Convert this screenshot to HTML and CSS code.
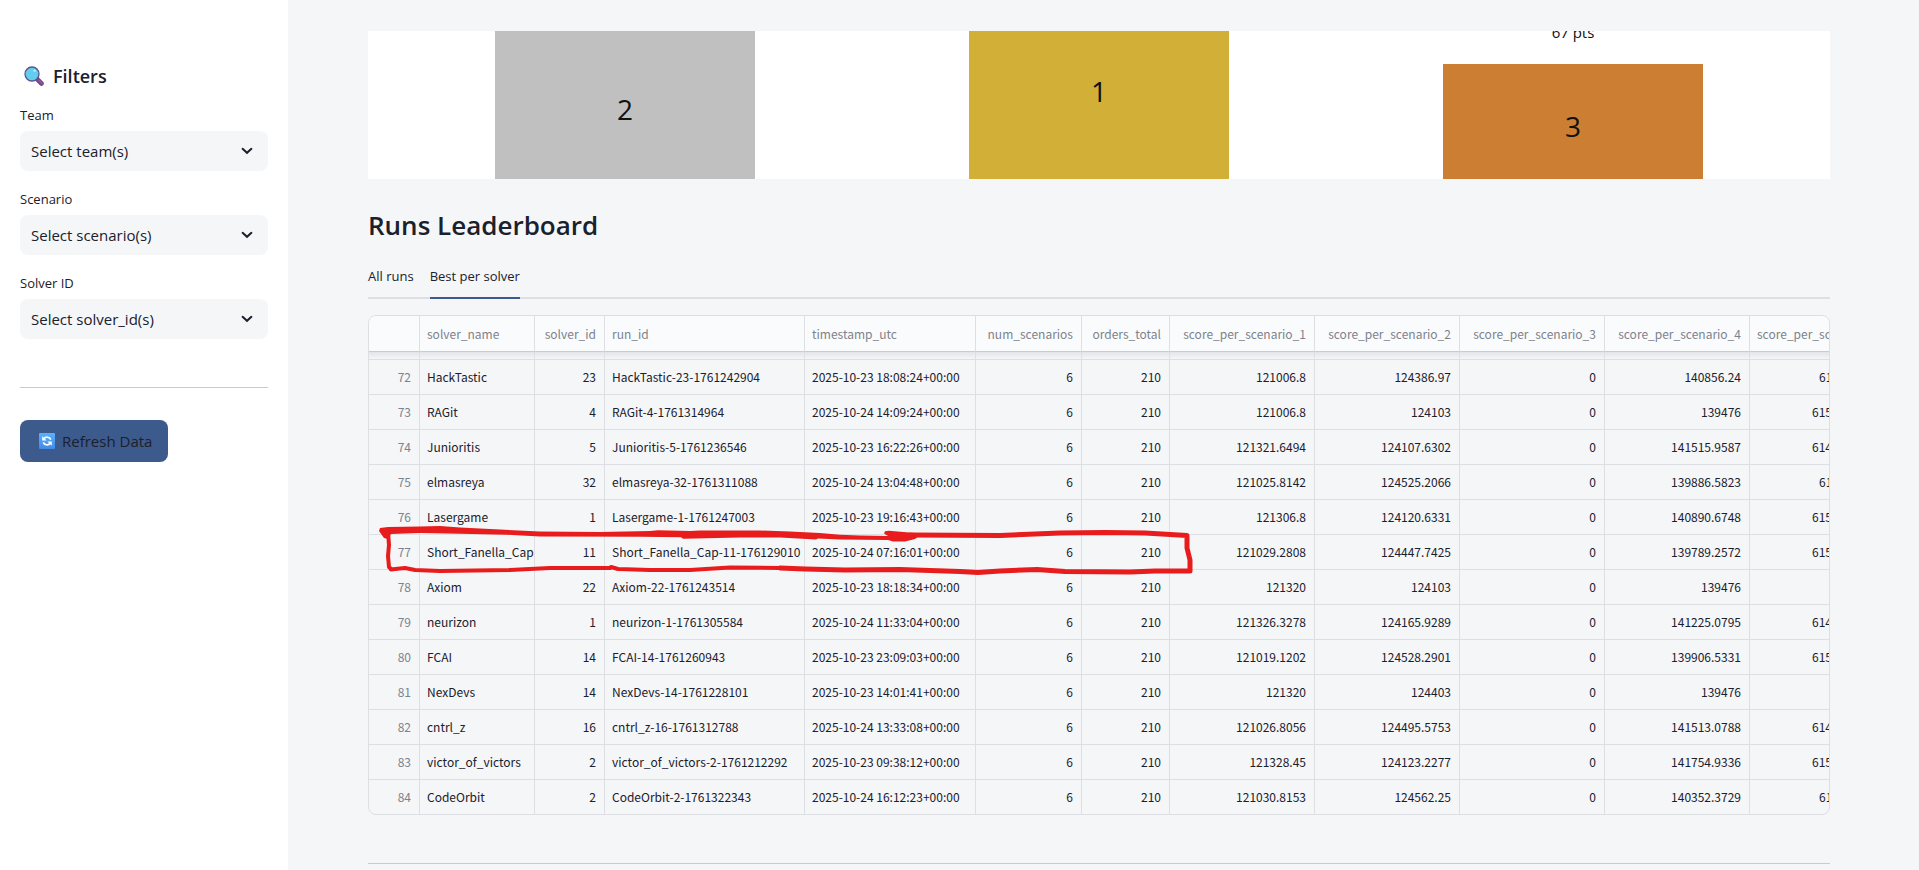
FILE: index.html
```html
<!DOCTYPE html>
<html lang="en">
<head>
<meta charset="utf-8">
<title>Runs Leaderboard</title>
<link rel="stylesheet" href="styles.css">
</head>
<body>
<div class="app">
  <aside class="sidebar">
    <h2 class="sidebar-title">
      <svg class="icon-search" viewBox="0 0 20 20" aria-hidden="true"><path d="M12.5 12.5 L17.5 17.5" stroke="#6f4a8c" stroke-width="4.6" stroke-linecap="round"/><path d="M15 14.5 L18 17.3" stroke="#8f5594" stroke-width="2" stroke-linecap="round"/><circle cx="8" cy="8" r="7" fill="#64cdee" stroke="#57568f" stroke-width="1.3"/><circle cx="10.6" cy="4.8" r="1.3" fill="#b4ebfb"/></svg>
      Filters
    </h2>
    <div class="field">
      <label for="team">Team</label>
      <div class="select-wrap"><select id="team"><option>Select team(s)</option></select><svg class="chevron" viewBox="0 0 12 8" aria-hidden="true"><path d="M1.6 1.8 L6 5.8 L10.4 1.8"/></svg></div>
    </div>
    <div class="field">
      <label for="scenario">Scenario</label>
      <div class="select-wrap"><select id="scenario"><option>Select scenario(s)</option></select><svg class="chevron" viewBox="0 0 12 8" aria-hidden="true"><path d="M1.6 1.8 L6 5.8 L10.4 1.8"/></svg></div>
    </div>
    <div class="field">
      <label for="solver">Solver ID</label>
      <div class="select-wrap"><select id="solver"><option>Select solver_id(s)</option></select><svg class="chevron" viewBox="0 0 12 8" aria-hidden="true"><path d="M1.6 1.8 L6 5.8 L10.4 1.8"/></svg></div>
    </div>
    <hr class="rule sidebar-rule">
    <button class="refresh" type="button">
      <svg class="icon-refresh" viewBox="0 0 16 16" aria-hidden="true"><defs><linearGradient id="rg" x2="0" y2="1"><stop stop-color="#58b2fb"/><stop offset="1" stop-color="#4389e8"/></linearGradient></defs><rect width="16" height="16" rx="1" fill="url(#rg)"/><g fill="none" stroke="#fff" stroke-width="1.7"><path d="M5 5.6 C6.5 3.6 10.5 3.6 11.8 6.6"/><path d="M11 10.4 C9.5 12.4 5.5 12.4 4.2 9.4"/></g><path d="M3.2 3.2 V7.6 H7.6Z M12.8 12.8 V8.4 H8.4Z" fill="#fff"/></svg>
      Refresh Data
    </button>
  </aside>

  <main class="main">
    <section class="podium" aria-label="Podium">
      <div class="step silver">2</div>
      <div class="step gold">1</div>
      <div class="third"><span class="points">67 pts</span><div class="step bronze">3</div></div>
    </section>

    <h1 class="heading">Runs Leaderboard</h1>
    <div class="tabs" role="tablist">
      <button class="tab" type="button" role="tab">All runs</button>
      <button class="tab active" type="button" role="tab" aria-selected="true">Best per solver</button>
    </div>

    <div class="grid-holder">
      <div class="grid">
        <table>
          <colgroup><col class="c-index"><col class="c-name"><col class="c-id"><col class="c-run"><col class="c-time"><col class="c-num"><col class="c-orders"><col class="c-score"><col class="c-score"><col class="c-score"><col class="c-score"><col class="c-score"></colgroup>
          <thead><tr><th></th><th>solver_name</th><th>solver_id</th><th>run_id</th><th>timestamp_utc</th><th>num_scenarios</th><th>orders_total</th><th>score_per_scenario_1</th><th>score_per_scenario_2</th><th>score_per_scenario_3</th><th>score_per_scenario_4</th><th>score_per_scenario_5</th></tr></thead>
          <tbody>
            <tr class="partial"><td></td><td></td><td></td><td></td><td></td><td></td><td></td><td></td><td></td><td></td><td></td><td></td></tr>
            <tr><td>72</td><td>HackTastic</td><td>23</td><td>HackTastic-23-1761242904</td><td>2025-10-23 18:08:24+00:00</td><td>6</td><td>210</td><td>121006.8</td><td>124386.97</td><td>0</td><td>140856.24</td><td class="short">61</td></tr>
            <tr><td>73</td><td>RAGit</td><td>4</td><td>RAGit-4-1761314964</td><td>2025-10-24 14:09:24+00:00</td><td>6</td><td>210</td><td>121006.8</td><td>124103</td><td>0</td><td>139476</td><td>615</td></tr>
            <tr><td>74</td><td>Junioritis</td><td>5</td><td>Junioritis-5-1761236546</td><td>2025-10-23 16:22:26+00:00</td><td>6</td><td>210</td><td>121321.6494</td><td>124107.6302</td><td>0</td><td>141515.9587</td><td>614</td></tr>
            <tr><td>75</td><td>elmasreya</td><td>32</td><td>elmasreya-32-1761311088</td><td>2025-10-24 13:04:48+00:00</td><td>6</td><td>210</td><td>121025.8142</td><td>124525.2066</td><td>0</td><td>139886.5823</td><td class="short">61</td></tr>
            <tr><td>76</td><td>Lasergame</td><td>1</td><td>Lasergame-1-1761247003</td><td>2025-10-23 19:16:43+00:00</td><td>6</td><td>210</td><td>121306.8</td><td>124120.6331</td><td>0</td><td>140890.6748</td><td>615</td></tr>
            <tr><td>77</td><td>Short_Fanella_Cap</td><td>11</td><td>Short_Fanella_Cap-11-176129010</td><td>2025-10-24 07:16:01+00:00</td><td>6</td><td>210</td><td>121029.2808</td><td>124447.7425</td><td>0</td><td>139789.2572</td><td>615</td></tr>
            <tr><td>78</td><td>Axiom</td><td>22</td><td>Axiom-22-1761243514</td><td>2025-10-23 18:18:34+00:00</td><td>6</td><td>210</td><td>121320</td><td>124103</td><td>0</td><td>139476</td><td></td></tr>
            <tr><td>79</td><td>neurizon</td><td>1</td><td>neurizon-1-1761305584</td><td>2025-10-24 11:33:04+00:00</td><td>6</td><td>210</td><td>121326.3278</td><td>124165.9289</td><td>0</td><td>141225.0795</td><td>614</td></tr>
            <tr><td>80</td><td>FCAI</td><td>14</td><td>FCAI-14-1761260943</td><td>2025-10-23 23:09:03+00:00</td><td>6</td><td>210</td><td>121019.1202</td><td>124528.2901</td><td>0</td><td>139906.5331</td><td>615</td></tr>
            <tr><td>81</td><td>NexDevs</td><td>14</td><td>NexDevs-14-1761228101</td><td>2025-10-23 14:01:41+00:00</td><td>6</td><td>210</td><td>121320</td><td>124403</td><td>0</td><td>139476</td><td></td></tr>
            <tr><td>82</td><td>cntrl_z</td><td>16</td><td>cntrl_z-16-1761312788</td><td>2025-10-24 13:33:08+00:00</td><td>6</td><td>210</td><td>121026.8056</td><td>124495.5753</td><td>0</td><td>141513.0788</td><td>614</td></tr>
            <tr><td>83</td><td>victor_of_victors</td><td>2</td><td>victor_of_victors-2-1761212292</td><td>2025-10-23 09:38:12+00:00</td><td>6</td><td>210</td><td>121328.45</td><td>124123.2277</td><td>0</td><td>141754.9336</td><td>615</td></tr>
            <tr><td>84</td><td>CodeOrbit</td><td>2</td><td>CodeOrbit-2-1761322343</td><td>2025-10-24 16:12:23+00:00</td><td>6</td><td>210</td><td>121030.8153</td><td>124562.25</td><td>0</td><td>140352.3729</td><td class="short">61</td></tr>
          </tbody>
        </table>
      </div>
      <svg class="marker" viewBox="368 515 840 70" width="840" height="70" aria-hidden="true">
        <path fill="#e81c1c" d="M380 528 L388 527 L420 526.5 L440 526 L460 527.5 L500 529.5 L540 531.5 L600 532 L650 531 L658 530.3 L690 531 L700 530.5 L760 530.5 L790 531.5 L820 533 L840 534.8 L860 535.5 L888 536 L884 533.5 L885 531.3 L889 530.8 L915 533 L919 536 L915 539 L905 541.5 L893 541.5 L888 540 L840 539.5 L818 538.5 L816 539.5 L780 537.5 L740 537.5 L683 538.8 L681 537.3 L640 536.8 L540 536.5 L507 534.8 L460 533.8 L420 533 L391 534 L388 539 L384 538 L379 531Z"/>
        <g fill="none" stroke="#e81c1c" stroke-width="5" stroke-linecap="round" stroke-linejoin="round">
          <path stroke-width="4" d="M388 532 L389 545 L388 556 L389 567 L391 569"/>
          <path stroke-width="4" d="M391 569.5 L400 568.5 L405 568 L415 570 L440 571 L510 570 L550 568 L610 568 L611 567 L618 569 L650 570 L690 570 L730 567.5 L780 568"/>
          <path d="M780 568 L805 569 L845 570 L900 569.5 L960 571.5 L978 572.5 L1000 571 L1037 569.5 L1065 571.5 L1130 572 L1155 571 L1190 571 L1190 560 L1187 548 L1187 535.5 L1145 533 L1105 532.5 L1060 533 L1000 535.5 L910 535"/>
        </g>
      </svg>
    </div>
    <hr class="rule">
  </main>
</div>
</body>
</html>
```
FILE: styles.css
```css
* { box-sizing: border-box; }

body {
  margin: 0;
  background: #f5f6f8;
  color: #1a202c;
  font-family: "Open Sans", "Noto Sans", sans-serif;
  font-size: 15px;
}

.app { display: flex; min-height: 100vh; }

.sidebar {
  flex: none;
  width: 288px;
  padding: 60px 20px 20px;
  background: #fff;
}

.sidebar-title {
  display: flex;
  align-items: center;
  gap: 9px;
  margin: 0 0 11px;
  padding-left: 4px;
  font-size: 18px;
  line-height: 32px;
  font-weight: 600;
}

.icon-search { width: 20px; height: 20px; }

.field { margin-bottom: 16px; }

.field label {
  display: block;
  padding-bottom: 4px;
  font-size: 13px;
  line-height: 24px;
}

.select-wrap { position: relative; }

.select-wrap select {
  display: block;
  width: 100%;
  height: 40px;
  padding: 0 36px 0 11px;
  border: 0;
  border-radius: 8px;
  appearance: none;
  background: #f5f6f8;
  color: inherit;
  font: inherit;
}

.chevron {
  position: absolute;
  top: 16px;
  right: 15px;
  width: 12px;
  height: 8px;
  fill: none;
  stroke: #1a202c;
  stroke-width: 2;
  stroke-linecap: round;
  pointer-events: none;
}

.rule { height: 1px; margin: 48px 0 0; border: 0; background: #c9cbcf; }
.sidebar-rule { margin-bottom: 32px; }

.refresh {
  display: inline-flex;
  align-items: center;
  gap: 7px;
  height: 42px;
  padding: 0 16px 0 19px;
  border: 0;
  border-radius: 8px;
  background: #3d5a8c;
  color: #1a202c;
  font: inherit;
}

.icon-refresh { width: 16px; height: 16px; }

.main { flex: 1; min-width: 0; padding: 31px 89px 6px 80px; }

.podium {
  display: flex;
  justify-content: space-between;
  align-items: flex-end;
  height: 148px;
  padding: 0 127px;
  overflow: hidden;
  background: #fff;
  color: #111;
}

.step {
  display: flex;
  justify-content: center;
  width: 260px;
  font-size: 28px;
  line-height: 40px;
}

.silver { height: 148px; padding-top: 58px; background: #c0c0c0; }
.gold { height: 148px; padding-top: 40px; background: #d2af37; }
.bronze { height: 115px; padding-top: 42px; background: #cc7f32; }

.third { display: flex; flex-direction: column; align-items: center; }
.points { padding-bottom: 20px; font-size: 15px; line-height: 24px; }

.heading {
  margin: 28px 0 22px;
  font-size: 26px;
  line-height: 36px;
  font-weight: 600;
}

.tabs { display: flex; gap: 16px; border-bottom: 2px solid #dddfe2; }

.tab {
  height: 34px;
  margin-bottom: -2px;
  padding: 0 0 10px;
  border: 0;
  border-bottom: 2px solid transparent;
  background: none;
  color: inherit;
  font: 13px/20px "Open Sans", "Noto Sans", sans-serif;
}

.active { border-color: #3d5a8c; }

.grid-holder { position: relative; margin-top: 16px; }

.grid {
  overflow: hidden;
  border: 1px solid #dddfe2;
  border-radius: 8px;
}

table {
  width: 1526px;
  table-layout: fixed;
  border-collapse: separate;
  border-spacing: 0;
  font-family: "Noto Sans CJK SC", sans-serif;
  font-size: 12px;
  line-height: 18px;
}

.c-index { width: 51px; }
.c-name { width: 115px; }
.c-id { width: 70px; }
.c-run { width: 200px; }
.c-time { width: 171px; }
.c-num { width: 106px; }
.c-orders { width: 88px; }
.c-score { width: 145px; }

th, td {
  height: 35px;
  padding: 0 8px 0 7px;
  overflow: hidden;
  border-right: 1px solid #dddfe2;
  border-bottom: 1px solid #dddfe2;
  text-align: right;
  white-space: nowrap;
}

th {
  height: 36px;
  border-bottom-color: #c9cbcf;
  background: #fafbfd;
  color: #7d828c;
  font-weight: 400;
}

th:nth-child(2), td:nth-child(2),
th:nth-child(4), td:nth-child(4),
th:nth-child(5), td:nth-child(5),
th:last-child, td:last-child { text-align: left; }

td:first-child { color: #7d828c; }
td:last-child { padding-left: 62px; }
td.short:last-child { padding-left: 69px; }

.partial td {
  height: 8px;
  background: linear-gradient(#e3e4e7, #f5f6f8);
}

tbody tr:last-child td { height: 34px; border-bottom: 0; }

.marker { position: absolute; top: 200px; left: 0; pointer-events: none; }
```
